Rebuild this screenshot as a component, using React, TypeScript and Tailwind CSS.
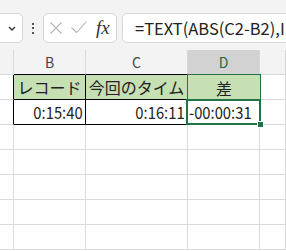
import React from 'react';

const GRID = 'border-[#dadada]';

const Cell: React.FC<{ className?: string; children?: React.ReactNode }> = ({ className = '', children }) => (
  <div className={`h-[25px] border-r border-b flex items-center whitespace-nowrap ${className}`}>{children}</div>
);

// Excel's UI font has narrow digits; squeeze the fallback a little
const Num: React.FC<{ children: React.ReactNode; right?: boolean }> = ({ children, right }) => (
  <span className={`inline-block text-[17px] leading-none scale-x-[0.87] ${right ? 'origin-right' : 'origin-left'}`}>{children}</span>
);

export default function App() {
  const emptyRows = [0, 1, 2, 3, 4];

  return (
    <div className="w-[286px] h-[251px] overflow-hidden bg-white font-['Noto_Sans_CJK_JP',sans-serif] text-[#222]">
      {/* formula bar */}
      <div className="h-[50px] bg-[#f3f3f3] flex items-start pt-[13px]">
        <div className="-ml-[20px] w-[43px] h-[30px] bg-white border border-[#d6d6d6] rounded-[5px] flex items-center justify-end pr-[6px]">
          <svg width="8" height="5" viewBox="0 0 8 5" fill="none" stroke="#333" strokeWidth="1.4">
            <path d="M1 1l3 3 3-3" />
          </svg>
        </div>
        <div className="w-[20px] h-[30px] flex flex-col items-center justify-center gap-[2.5px]">
          <span className="w-[2px] h-[2px] bg-[#555]" />
          <span className="w-[2px] h-[2px] bg-[#555]" />
          <span className="w-[2px] h-[2px] bg-[#555]" />
        </div>
        <div className="w-[74px] h-[30px] bg-white border border-[#d6d6d6] rounded-[5px] flex items-center pl-[6px]">
          <svg width="12" height="12" viewBox="0 0 12 12" fill="none" stroke="#b5b5b5" strokeWidth="1.1">
            <path d="M0.5 0.5l11 11M11.5 0.5l-11 11" />
          </svg>
          <svg className="ml-[9px] mt-[-2px]" width="16" height="12" viewBox="0 0 16 12" fill="none" stroke="#b5b5b5" strokeWidth="1.1">
            <path d="M0.5 6.5l5 5 10-11" />
          </svg>
          <span className="ml-[9px] mt-[-2px] font-['Liberation_Serif',serif] italic text-[19px] leading-none text-[#333]">fx</span>
        </div>
        <div className="ml-[5px] flex-1 -mr-[40px] h-[30px] bg-white border border-[#d6d6d6] rounded-[5px] flex items-center pl-[12px] whitespace-nowrap overflow-hidden text-[16.5px]">
          =TEXT(ABS(C2-B2),IF(C2&lt;B2,"-","")&amp;"hh:mm:ss")
        </div>
      </div>

      {/* sheet */}
      <div className="grid grid-cols-[14px_72px_102px_72px_1fr] text-[16px]">
        {/* column headers */}
        <Cell className="bg-[#f3f3f3] border-[#d8d8d8]" />
        <Cell className="bg-[#f3f3f3] border-r-[#d8d8d8] border-b-black justify-center text-[14px] text-[#444]">B</Cell>
        <Cell className="bg-[#f3f3f3] border-r-[#d8d8d8] border-b-black justify-center text-[14px] text-[#444]">C</Cell>
        <div className="h-[25px] bg-[#d2d2d2] border-r border-r-[#d8d8d8] flex items-center justify-center text-[14px] text-[#1e6b41]">D</div>
        <Cell className="bg-[#f3f3f3] border-[#d8d8d8]" />

        {/* row 1 */}
        <Cell className="border-r-black border-b-[#dadada]" />
        <Cell className="bg-[#c6e0b4] border-black justify-center">レコード</Cell>
        <Cell className="bg-[#c6e0b4] border-black justify-center">今回のタイム</Cell>
        <div className="relative h-[25px] bg-[#c6e0b4] flex items-center justify-center">
          差
          <div className="absolute -left-[1px] -top-[1px] -right-[1px] -bottom-[1px] border border-[#217346]" />
        </div>
        <Cell className={GRID} />

        {/* row 2 */}
        <Cell className="border-r-black border-b-[#dadada]" />
        <Cell className="border-black justify-end pr-[2px] pb-[2px]"><Num right>0:15:40</Num></Cell>
        <Cell className="border-black justify-end pr-[2px] pb-[2px]"><Num right>0:16:11</Num></Cell>
        <div className="relative h-[25px] border-b border-[#dadada] flex items-center pl-[1px] pb-[2px] whitespace-nowrap">
          <Num>-00:00:31</Num>
          <div className="absolute -left-[2px] -top-[1px] -right-[1px] -bottom-[1px] border-2 border-[#217346]" />
          <div className="absolute -right-[4px] -bottom-[4px] w-[7px] h-[7px] bg-[#217346] border border-white" />
        </div>
        <Cell className={GRID} />

        {emptyRows.map((r) => (
          <React.Fragment key={r}>
            <Cell className={GRID} />
            <Cell className={GRID} />
            <Cell className={GRID} />
            <Cell className={GRID} />
            <Cell className={GRID} />
          </React.Fragment>
        ))}
      </div>
    </div>
  );
}
